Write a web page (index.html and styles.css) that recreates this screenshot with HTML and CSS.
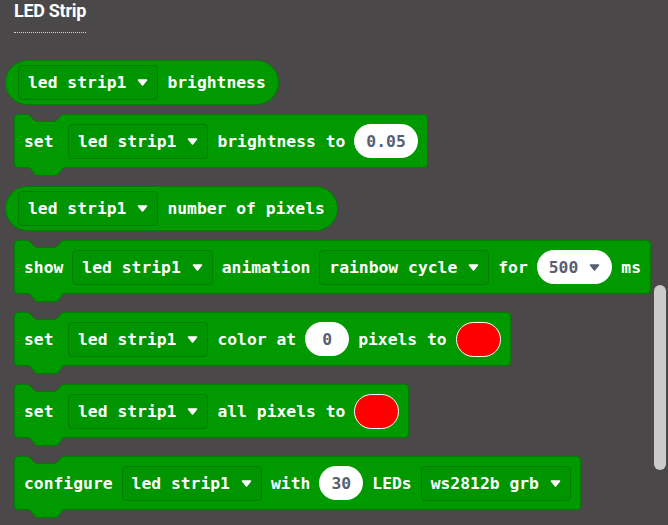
FILE: index.html
```html
<!DOCTYPE html>
<html>
<head>
<meta charset="utf-8">
<title>LED Strip</title>
<link rel="stylesheet" href="styles.css">
</head>
<body>
<div class="flyout">
  <div class="cat-label"><span class="cat-title">LED Strip</span></div>
  <div class="blocks">

    <div class="block reporter">
      <div class="dd">led strip1<svg class="arrow" width="11" height="7" viewBox="0 0 11 7"><path d="M1.5 1H9.5L5.5 6Z" fill="#fff" stroke="#fff" stroke-width="1.6" stroke-linejoin="round"/></svg></div>
      <span class="lbl">brightness</span>
    </div>

    <div class="block stmt">
      <svg class="notch" width="36" height="9" viewBox="0 0 36 9"><path d="M0 0L7 7.5H28L35 0Z" class="notch-fill"/><path d="M0.5 0.5L7.5 7.5H27.5L34.5 0.5" class="edge"/></svg>
      <span class="lbl lbl-set">set</span>
      <div class="dd">led strip1<svg class="arrow" width="11" height="7" viewBox="0 0 11 7"><path d="M1.5 1H9.5L5.5 6Z" fill="#fff" stroke="#fff" stroke-width="1.6" stroke-linejoin="round"/></svg></div>
      <span class="lbl">brightness to</span>
      <div class="num">0.05</div>
      <svg class="tab" width="36" height="10" viewBox="0 0 36 10"><path d="M0 0H35L28 8.5H7Z" class="tab-fill"/><path d="M0.5 0.5L7.5 8.5H27.5L34.5 0.5" class="edge"/></svg>
    </div>

    <div class="block reporter">
      <div class="dd">led strip1<svg class="arrow" width="11" height="7" viewBox="0 0 11 7"><path d="M1.5 1H9.5L5.5 6Z" fill="#fff" stroke="#fff" stroke-width="1.6" stroke-linejoin="round"/></svg></div>
      <span class="lbl">number of pixels</span>
    </div>

    <div class="block stmt">
      <svg class="notch" width="36" height="9" viewBox="0 0 36 9"><path d="M0 0L7 7.5H28L35 0Z" class="notch-fill"/><path d="M0.5 0.5L7.5 7.5H27.5L34.5 0.5" class="edge"/></svg>
      <span class="lbl">show</span>
      <div class="dd">led strip1<svg class="arrow" width="11" height="7" viewBox="0 0 11 7"><path d="M1.5 1H9.5L5.5 6Z" fill="#fff" stroke="#fff" stroke-width="1.6" stroke-linejoin="round"/></svg></div>
      <span class="lbl">animation</span>
      <div class="dd">rainbow cycle<svg class="arrow" width="11" height="7" viewBox="0 0 11 7"><path d="M1.5 1H9.5L5.5 6Z" fill="#fff" stroke="#fff" stroke-width="1.6" stroke-linejoin="round"/></svg></div>
      <span class="lbl">for</span>
      <div class="num">500<svg class="arrow" width="11" height="7" viewBox="0 0 11 7"><path d="M1.5 1H9.5L5.5 6Z" fill="#575e75" stroke="#575e75" stroke-width="1.6" stroke-linejoin="round"/></svg></div>
      <span class="lbl">ms</span>
      <svg class="tab" width="36" height="10" viewBox="0 0 36 10"><path d="M0 0H35L28 8.5H7Z" class="tab-fill"/><path d="M0.5 0.5L7.5 8.5H27.5L34.5 0.5" class="edge"/></svg>
    </div>

    <div class="block stmt">
      <svg class="notch" width="36" height="9" viewBox="0 0 36 9"><path d="M0 0L7 7.5H28L35 0Z" class="notch-fill"/><path d="M0.5 0.5L7.5 7.5H27.5L34.5 0.5" class="edge"/></svg>
      <span class="lbl lbl-set">set</span>
      <div class="dd">led strip1<svg class="arrow" width="11" height="7" viewBox="0 0 11 7"><path d="M1.5 1H9.5L5.5 6Z" fill="#fff" stroke="#fff" stroke-width="1.6" stroke-linejoin="round"/></svg></div>
      <span class="lbl">color at</span>
      <div class="num">0</div>
      <span class="lbl">pixels to</span>
      <div class="color"></div>
      <svg class="tab" width="36" height="10" viewBox="0 0 36 10"><path d="M0 0H35L28 8.5H7Z" class="tab-fill"/><path d="M0.5 0.5L7.5 8.5H27.5L34.5 0.5" class="edge"/></svg>
    </div>

    <div class="block stmt">
      <svg class="notch" width="36" height="9" viewBox="0 0 36 9"><path d="M0 0L7 7.5H28L35 0Z" class="notch-fill"/><path d="M0.5 0.5L7.5 7.5H27.5L34.5 0.5" class="edge"/></svg>
      <span class="lbl lbl-set">set</span>
      <div class="dd">led strip1<svg class="arrow" width="11" height="7" viewBox="0 0 11 7"><path d="M1.5 1H9.5L5.5 6Z" fill="#fff" stroke="#fff" stroke-width="1.6" stroke-linejoin="round"/></svg></div>
      <span class="lbl">all pixels to</span>
      <div class="color"></div>
      <svg class="tab" width="36" height="10" viewBox="0 0 36 10"><path d="M0 0H35L28 8.5H7Z" class="tab-fill"/><path d="M0.5 0.5L7.5 8.5H27.5L34.5 0.5" class="edge"/></svg>
    </div>

    <div class="block stmt">
      <svg class="notch" width="36" height="9" viewBox="0 0 36 9"><path d="M0 0L7 7.5H28L35 0Z" class="notch-fill"/><path d="M0.5 0.5L7.5 7.5H27.5L34.5 0.5" class="edge"/></svg>
      <span class="lbl">configure</span>
      <div class="dd">led strip1<svg class="arrow" width="11" height="7" viewBox="0 0 11 7"><path d="M1.5 1H9.5L5.5 6Z" fill="#fff" stroke="#fff" stroke-width="1.6" stroke-linejoin="round"/></svg></div>
      <span class="lbl">with</span>
      <div class="num">30</div>
      <span class="lbl">LEDs</span>
      <div class="dd">ws2812b grb<svg class="arrow" width="11" height="7" viewBox="0 0 11 7"><path d="M1.5 1H9.5L5.5 6Z" fill="#fff" stroke="#fff" stroke-width="1.6" stroke-linejoin="round"/></svg></div>
      <svg class="tab" width="36" height="10" viewBox="0 0 36 10"><path d="M0 0H35L28 8.5H7Z" class="tab-fill"/><path d="M0.5 0.5L7.5 8.5H27.5L34.5 0.5" class="edge"/></svg>
    </div>

  </div>
  <div class="scrollbar"></div>
</div>
</body>
</html>
```

FILE: styles.css
```css
* {
  box-sizing: border-box;
}

html,
body {
  margin: 0;
  padding: 0;
}

body {
  background: #4a4848;
  overflow: hidden;
  font-family: "DejaVu Sans Mono", "Liberation Mono", monospace;
}

.flyout {
  position: relative;
  width: 668px;
  height: 525px;
  padding-left: 14px;
}

.cat-label {
  display: flex;
}

.cat-title {
  display: inline-block;
  font-family: Roboto, "Liberation Sans", sans-serif;
  font-weight: 700;
  font-size: 18px;
  line-height: 21px;
  letter-spacing: -0.3px;
  color: #ffffff;
  padding-bottom: 11px;
  border-bottom: 1px dotted #d2d2d2;
}

.blocks {
  display: flex;
  flex-direction: column;
  align-items: flex-start;
  margin-top: 27px;
}

.block {
  position: relative;
  display: flex;
  align-items: center;
  gap: 9px;
  background: #009900;
  border: 1px solid #007c00;
  color: #ffffff;
  font-weight: 700;
  font-size: 16.35px;
  white-space: pre;
}

.reporter {
  height: 45px;
  border-radius: 22.5px;
  padding: 0 12px;
  margin-left: -9px;
  margin-bottom: 9px;
}

.stmt {
  height: 54px;
  border-radius: 4px;
  padding: 0 9px;
  margin-bottom: 18px;
}

.lbl-set {
  margin-right: 5.5px;
}

.dd {
  display: flex;
  align-items: center;
  gap: 11px;
  height: 35px;
  padding: 0 9px;
  border: 1px solid #007c00;
  border-radius: 4px;
  background: #009500;
}

.arrow {
  display: block;
  flex: none;
}

.num {
  display: flex;
  align-items: center;
  justify-content: center;
  gap: 11px;
  height: 34px;
  min-width: 44px;
  padding: 0 12px;
  border-radius: 17px;
  background: #ffffff;
  color: #575e75;
}

.color {
  width: 45px;
  height: 35px;
  border-radius: 17.5px;
  background: #ff0000;
  border: 1px solid #ffffff;
}

.notch {
  position: absolute;
  top: -1px;
  left: 13px;
  overflow: visible;
}

.notch-fill {
  fill: #4a4848;
}

.tab {
  position: absolute;
  top: 100%;
  left: 14px;
  overflow: visible;
}

.tab-fill {
  fill: #009900;
}

.edge {
  fill: none;
  stroke: #007c00;
  stroke-width: 1;
}

.scrollbar {
  position: absolute;
  left: 654px;
  top: 285px;
  width: 12px;
  height: 185px;
  border-radius: 6px;
  background: #cbcbcb;
}
```
